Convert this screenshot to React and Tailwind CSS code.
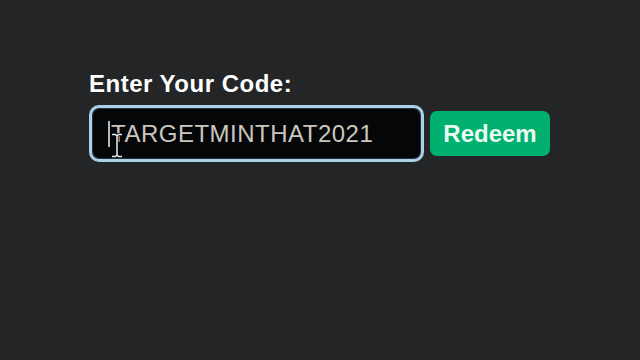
export default function App() {
  return (
    <div className="w-[640px] h-[360px] bg-[#232527] font-['Liberation_Sans',Arial,sans-serif] overflow-hidden">
      <div className="pt-[70px] pl-[89px] flex flex-col">
        <label className="text-[24px] leading-[28px] font-bold text-white tracking-[0.5px]">
          Enter Your Code:
        </label>
        <div className="mt-[7px] flex items-center gap-[6px]">
          <div className="relative w-[335px] h-[57px] rounded-[10px] border-[3px] border-[#a9d0e8] bg-[#2b3136] p-px">
            <div className="h-full rounded-[7px] bg-[#050608] flex items-center pl-[15px]">
              <span className="w-[2px] h-[26px] bg-[#b9b9b9]" />
              <span className="text-[24px] leading-none text-[#cbc7bf] tracking-[0.5px] ml-px">
                TARGETMINTHAT2021
              </span>
            </div>
            <svg className="absolute left-[19px] top-[25px]" width="12" height="25" viewBox="0 0 12 25">
              <path d="M1 1.5h3.5l1.5 1.5 1.5-1.5H11M6 3v19M1 23.5h3.5l1.5-1.5 1.5 1.5H11" fill="none" stroke="#000" strokeWidth="3" />
              <path d="M1 1.5h3.5l1.5 1.5 1.5-1.5H11M6 3v19M1 23.5h3.5l1.5-1.5 1.5 1.5H11" fill="none" stroke="#e8f0f4" strokeWidth="1.5" />
            </svg>
          </div>
          <button className="w-[120px] h-[45px] rounded-[7px] bg-[#00b06f] text-[#e9fbf2] text-[24px] font-bold leading-none">
            Redeem
          </button>
        </div>
      </div>
    </div>
  );
}
